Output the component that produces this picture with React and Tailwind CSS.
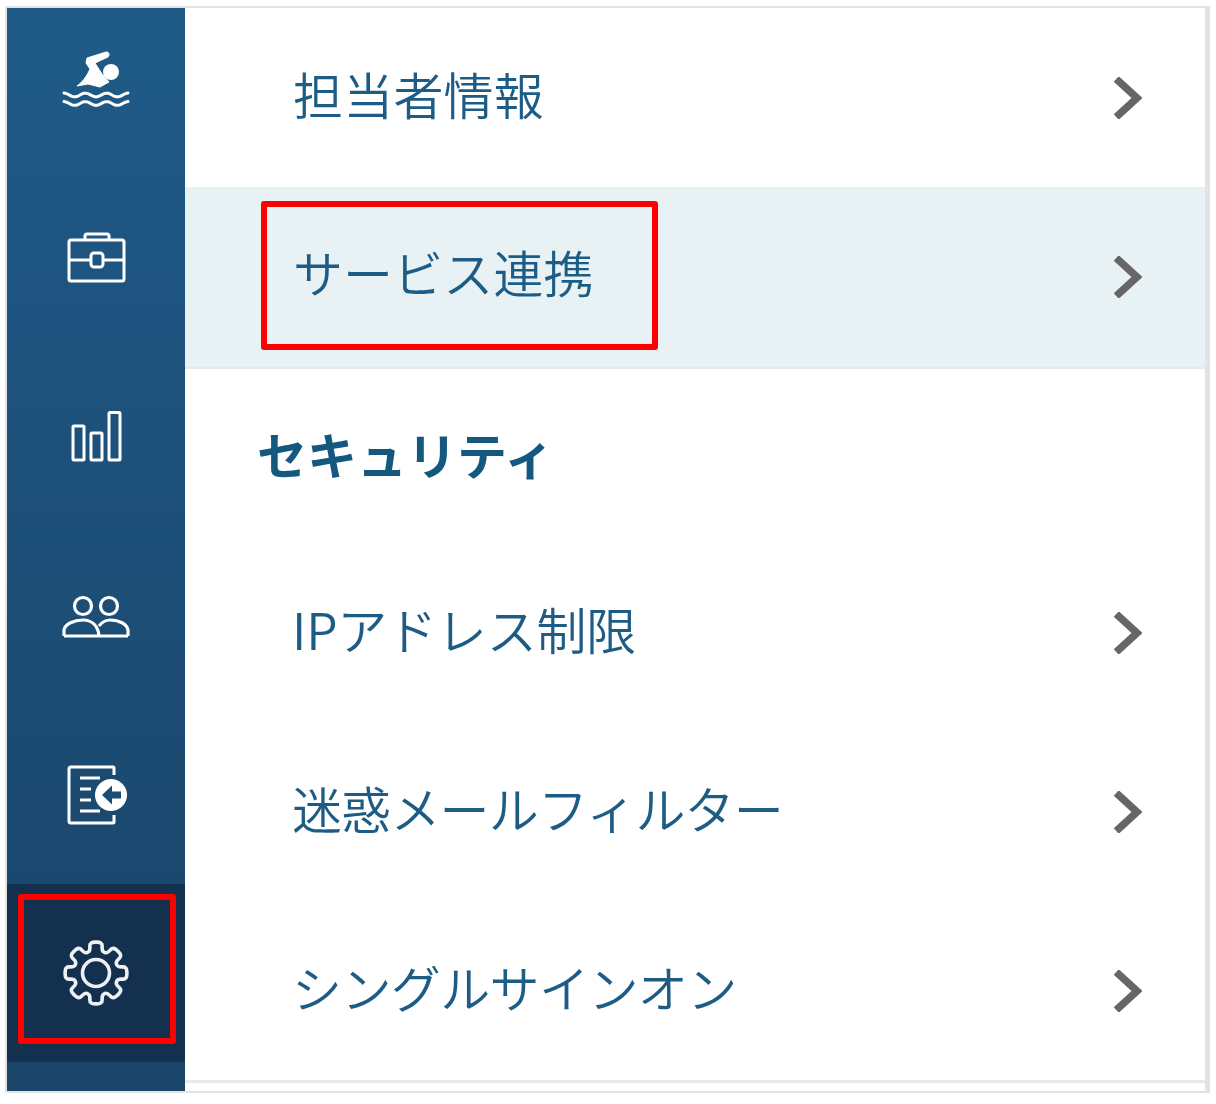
const FONT = "font-['Noto_Sans_CJK_JP','Noto_Sans',sans-serif]";

const Chevron = () => (
  <svg width="28" height="42" viewBox="0 0 28 42" className="shrink-0">
    <path d="M5 4.5 L23 21 L5 37.5" fill="none" stroke="#666666" strokeWidth="7.5" strokeLinejoin="miter" strokeLinecap="square" />
  </svg>
);

const wave = (base) => {
  let d = "";
  for (let x = 2; x <= 66; x += 2) {
    const y = base - 1.9 * Math.cos((2 * Math.PI * 3 * (x - 2)) / 64);
    d += `${x === 2 ? "M" : "L"}${x} ${y.toFixed(2)} `;
  }
  return d;
};

const Swim = () => (
  <svg width="68" height="56" viewBox="0 0 68 56">
    <circle cx="49" cy="21" r="8" fill="#fff" />
    <path d="M44 1 C47 0.5 48 4 46 6 L33 12 L40 23 L47 31 L38 36 L26 33 L15 35 C20 31 24 27 28 18 L24 12 L25 7 Z" fill="#fff" stroke="#fff" strokeWidth="1" strokeLinejoin="round" />
    <path d={wave(44)} fill="none" stroke="#fff" strokeWidth="3" strokeLinecap="round" />
    <path d={wave(52.5)} fill="none" stroke="#fff" strokeWidth="3" strokeLinecap="round" />
  </svg>
);

const Briefcase = () => (
  <svg width="60" height="52" viewBox="0 0 60 52" fill="none" stroke="#fff" strokeWidth="3" strokeLinejoin="round" className="ml-[1px]">
    <rect x="2" y="8" width="55" height="41" rx="2" />
    <path d="M18 8 V4 Q18 2 20 2 H40 Q42 2 42 4 V8" />
    <path d="M2 28 H23 M36 28 H57" />
    <rect x="24" y="21" width="12" height="14" rx="3" />
  </svg>
);

const Bars = () => (
  <svg width="52" height="52" viewBox="0 0 52 52" fill="none" stroke="#fff" strokeWidth="3" className="ml-[2px]">
    <rect x="2" y="15" width="11" height="34" rx="1" />
    <rect x="20" y="22" width="11" height="27" rx="1" />
    <rect x="38" y="1.5" width="11" height="47.5" rx="1" />
  </svg>
);

const People = () => (
  <svg width="68" height="46" viewBox="0 0 68 46" fill="none" stroke="#fff" strokeWidth="3.2">
    <circle cx="21" cy="13" r="8.5" />
    <circle cx="47" cy="13" r="8.5" />
    <path d="M2 43 V37 C3 31 12 27 21 27 C30 27 36 33 37 43" />
    <path d="M37 33 C40 29 45 27 48 27 C57 27 65 31 66 37 V43" />
    <path d="M2 43 H66" />
  </svg>
);

const Doc = () => (
  <svg width="62" height="60" viewBox="0 0 62 60" fill="none" className="ml-[3px]">
    <path d="M47 10 V3 Q47 2 46 2 H4 Q2 2 2 4 V56 Q2 58 4 58 H46 Q47 58 47 57 V50" stroke="#fff" strokeWidth="3" strokeLinejoin="round" />
    <path d="M13 13 H33 M13 24 H24 M13 35 H24 M13 46 H33" stroke="#fff" strokeWidth="3" />
    <circle cx="44" cy="30" r="16" fill="#fff" />
    <path d="M35 30 L45 20.5 V26.5 H54 V33.5 H45 V39.5 Z" fill="#1b4c74" />
  </svg>
);

const gearPath = (() => {
  const pts = [];
  const n = 8;
  const cx = 34, cy = 34;
  const ro = 31.5, ri = 22.5;
  for (let i = 0; i < n; i++) {
    const a = (i * 2 * Math.PI) / n - Math.PI / 2;
    const w1 = 0.2, w2 = 0.27;
    for (const [t, r] of [[a - w2, ri], [a - w1, ro], [a + w1, ro], [a + w2, ri]]) {
      pts.push([cx + r * Math.cos(t), cy + r * Math.sin(t)]);
    }
  }
  const k = 0.42;
  const m = pts.length;
  let d = "";
  pts.forEach((p, i) => {
    const a = pts[(i - 1 + m) % m];
    const b = pts[(i + 1) % m];
    const s = [p[0] + (a[0] - p[0]) * k, p[1] + (a[1] - p[1]) * k];
    const e = [p[0] + (b[0] - p[0]) * k, p[1] + (b[1] - p[1]) * k];
    d += `${i ? "L" : "M"}${s[0].toFixed(2)} ${s[1].toFixed(2)} Q${p[0].toFixed(2)} ${p[1].toFixed(2)} ${e[0].toFixed(2)} ${e[1].toFixed(2)} `;
  });
  return d + "Z";
})();

const Gear = () => (
  <svg width="68" height="68" viewBox="0 0 68 68" fill="none" stroke="#eef1f4" strokeWidth="3.6" strokeLinejoin="round">
    <path d={gearPath} />
    <circle cx="34" cy="34" r="13.5" />
  </svg>
);

const Row = ({ label, active, text }) => (
  <div className={`shrink-0 flex items-center justify-between pl-[107px] pr-[63px] ${active ? "bg-[#e8f1f4] h-[182px] border-b-2 border-[#e6e9ea]" : "h-[179px]"}`}>
    <span className={`text-[50px] leading-none font-[350] text-[#1d5c85] ${text}`}>{label}</span>
    <Chevron />
  </div>
);

export default function App() {
  return (
    <div className={`w-[1216px] h-[1104px] bg-white pt-[6px] pl-[5px] ${FONT}`}>
      <div className="relative w-[1205px] h-[1087px] flex border-t-2 border-l-2 border-b-2 border-r-[5px] border-[#e3e3e3] bg-white">
        <div className="w-[178px] shrink-0 flex flex-col bg-gradient-to-b from-[#1f5a88] to-[#1a4468]">
          <div className="h-[160px] pb-[18px] shrink-0 flex items-center justify-center"><Swim /></div>
          <div className="h-[179px] shrink-0 flex items-center justify-center"><Briefcase /></div>
          <div className="h-[179px] shrink-0 flex items-center justify-center"><Bars /></div>
          <div className="h-[179px] shrink-0 flex items-center justify-center"><People /></div>
          <div className="h-[179px] shrink-0 flex items-center justify-center"><Doc /></div>
          <div className="h-[178px] shrink-0 flex items-center justify-center bg-[#14304f]"><Gear /></div>
        </div>
        <div className="flex-1 min-w-0 flex flex-col">
          <Row label="担当者情報" text="-mt-[9px] ml-[1px] tracking-[0.2px]" />
          <Row label="サービス連携" active text="-mt-[12px] ml-[1px] tracking-[0.1px]" />
          <div className="h-[174px] shrink-0 flex items-center pl-[72px]">
            <span className="-mt-[6px] text-[50px] leading-none font-bold text-[#15587f]">セキュリティ</span>
          </div>
          <Row label="IPアドレス制限" text="-mt-[9px] tracking-[-0.2px]" />
          <Row label="迷惑メールフィルター" text="-mt-[9px] tracking-[-0.8px]" />
          <div className="border-b-[3px] border-[#e9e9e9]">
            <Row label="シングルサインオン" text="-mt-[9px] tracking-[-0.6px]" />
          </div>
        </div>
        <div className="absolute left-[254px] top-[193px] w-[397px] h-[149px] border-[6px] border-[#ff0000] rounded-[3px]" />
        <div className="absolute left-[11px] top-[886px] w-[158px] h-[150px] border-[6px] border-[#ff0000] rounded-[3px]" />
      </div>
    </div>
  );
}
